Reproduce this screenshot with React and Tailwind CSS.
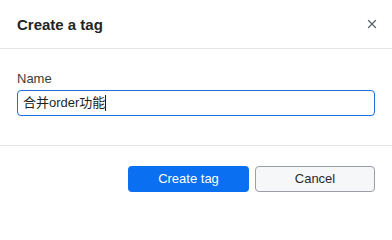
import { X } from "lucide-react"

export default function App() {
  return (
    <div
      className="w-[392px] h-[205px] bg-white flex flex-col text-[#1f1f1f]"
      style={{ fontFamily: '"Segoe UI", "Liberation Sans", "Noto Sans CJK SC", sans-serif' }}
    >
      {/* Header */}
      <div className="h-[49px] flex items-center justify-between pl-[17px] pr-[10px] border-b border-[#e4e4e4]">
        <h2 className="text-[15px] font-bold text-[#242424] pt-[2px]">Create a tag</h2>
        <button className="w-5 h-5 flex items-center justify-center text-[#5f636a]">
          <X className="w-[14px] h-[14px]" strokeWidth={2.2} />
        </button>
      </div>

      {/* Body */}
      <div className="h-[97px] px-[17px] pt-[22px] border-b border-[#e4e4e4]">
        <label className="block text-[13px] text-[#3b3b3b] leading-[16px] mb-[3px]">Name</label>
        <div className="w-[358px] h-[26px] rounded-[4px] border border-[#1f6fdc] flex items-center px-[5px] text-[13px] text-[#1f1f1f]">
          <span>合并order功能</span>
          <span className="w-px h-[16px] bg-[#1f1f1f]"></span>
        </div>
      </div>

      {/* Footer */}
      <div className="flex justify-end gap-[6px] pr-[17px] pt-[20px]">
        <button className="w-[121px] h-[26px] rounded-[4px] bg-[#0a6ff0] text-white text-[13px]">
          Create tag
        </button>
        <button className="w-[120px] h-[26px] rounded-[4px] bg-[#f6f7f9] border border-[#9a9ea5] text-[#2a2a2a] text-[13px]">
          Cancel
        </button>
      </div>
    </div>
  )
}
